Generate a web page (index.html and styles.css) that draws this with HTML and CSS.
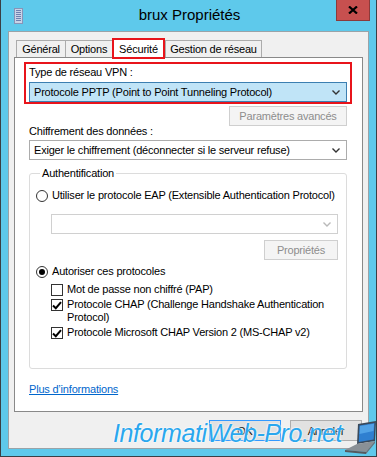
FILE: index.html
```html
<!DOCTYPE html>
<html lang="fr">
<head>
    <meta charset="UTF-8">
    <title>brux Propriétés</title>
    <link rel="stylesheet" href="styles.css">
</head>
<body>
    <div class="window">
        <div class="titlebar">
            <svg class="app-icon" width="9" height="16" viewBox="0 0 9 16">
                <rect x="0.5" y="0.5" width="8" height="15" fill="#c9d3e6" stroke="#8794b8"/>
                <rect x="2" y="2" width="5" height="1" fill="#6f80b0"/>
                <rect x="2" y="4" width="5" height="1" fill="#6f80b0"/>
                <rect x="2" y="6" width="5" height="1" fill="#6f80b0"/>
                <rect x="2" y="8" width="5" height="1" fill="#6f80b0"/>
                <rect x="2" y="10" width="5" height="1" fill="#6f80b0"/>
                <rect x="2" y="12" width="5" height="1" fill="#6f80b0"/>
            </svg>
            <div class="title">brux Propriétés</div>
            <div class="close-btn">
                <svg width="10" height="8" viewBox="0 0 10 8">
                    <path d="M1 0.5 L9 7.5 M9 0.5 L1 7.5" stroke="#000" stroke-width="2.2"/>
                </svg>
            </div>
        </div>

        <div class="client">
            <div class="tabs">
                <div class="tab tab-general">Général</div>
                <div class="tab tab-options">Options</div>
                <div class="tab tab-active">Sécurité</div>
                <div class="tab tab-gestion">Gestion de réseau</div>
            </div>

            <div class="panel">
                <div class="highlight">
                    <div class="label">Type de réseau VPN :</div>
                    <div class="combo combo-focus">
                        <span>Protocole PPTP (Point to Point Tunneling Protocol)</span>
                        <svg class="chevron" width="8" height="5" viewBox="0 0 8 5"><path d="M0.5 0.5 L4 4 L7.5 0.5" fill="none" stroke="#333" stroke-width="1.4"/></svg>
                    </div>
                </div>

                <div class="right-row">
                    <button class="btn btn-advanced" disabled>Paramètres avancés</button>
                </div>

                <div class="label label-chiffrement">Chiffrement des données :</div>
                <div class="combo">
                    <span>Exiger le chiffrement (déconnecter si le serveur refuse)</span>
                    <svg class="chevron" width="8" height="5" viewBox="0 0 8 5"><path d="M0.5 0.5 L4 4 L7.5 0.5" fill="none" stroke="#333" stroke-width="1.4"/></svg>
                </div>

                <fieldset class="group">
                    <legend>Authentification</legend>

                    <div class="option">
                        <span class="radio"></span>
                        <span>Utiliser le protocole EAP (Extensible Authentication Protocol)</span>
                    </div>

                    <div class="sub">
                        <div class="combo combo-disabled">
                            <span></span>
                            <svg class="chevron" width="8" height="5" viewBox="0 0 8 5"><path d="M0.5 0.5 L4 4 L7.5 0.5" fill="none" stroke="#b9b9b9" stroke-width="1.4"/></svg>
                        </div>
                        <div class="right-row">
                            <button class="btn btn-props" disabled>Propriétés</button>
                        </div>
                    </div>

                    <div class="option option-second">
                        <span class="radio checked"></span>
                        <span>Autoriser ces protocoles</span>
                    </div>

                    <div class="checks">
                        <div class="check-row">
                            <span class="checkbox"></span>
                            <span>Mot de passe non chiffré (PAP)</span>
                        </div>
                        <div class="check-row">
                            <span class="checkbox"><svg width="10" height="9" viewBox="0 0 10 9"><path d="M1 4.5 L3.8 7.2 L9 1.2" fill="none" stroke="#000" stroke-width="2"/></svg></span>
                            <span>Protocole CHAP (Challenge Handshake Authentication<br>Protocol)</span>
                        </div>
                        <div class="check-row">
                            <span class="checkbox"><svg width="10" height="9" viewBox="0 0 10 9"><path d="M1 4.5 L3.8 7.2 L9 1.2" fill="none" stroke="#000" stroke-width="2"/></svg></span>
                            <span>Protocole Microsoft CHAP Version 2 (MS-CHAP v2)</span>
                        </div>
                    </div>
                </fieldset>

                <a class="more-link" href="#">Plus d’informations</a>
            </div>

            <div class="dialog-buttons">
                <button class="btn btn-dialog btn-default">OK</button>
                <button class="btn btn-dialog">Annuler</button>
            </div>
        </div>

        <div class="watermark">
            <span class="watermark-text">InformatiWeb-Pro.net</span>
            <svg class="laptop" width="34" height="34" viewBox="0 0 34 34">
                <path d="M14 4 L32 1 L31 21 L13 24 Z" fill="#3a4a5c"/>
                <path d="M15.5 5.5 L30.5 3 L29.7 19.5 L14.8 22 Z" fill="#2f7fd0"/>
                <path d="M16 6 L30 3.8 L29.5 11 L15.5 14 Z" fill="#5fb0f0" opacity="0.7"/>
                <path d="M13 24 L31 21 L22 32 L1 30 Z" fill="#8a9096"/>
                <path d="M1 30 L22 32 L22 34 L1 32 Z" fill="#55595e"/>
                <path d="M22 32 L31 21 L31 23 L22 34 Z" fill="#6c7075"/>
            </svg>
        </div>
    </div>
</body>
</html>
```

FILE: styles.css
```css
* {
    box-sizing: border-box;
}

body {
    margin: 0;
    font-family: "Liberation Sans", Arial, sans-serif;
    font-size: 11px;
    letter-spacing: -0.2px;
    color: #000;
}

.window {
    position: relative;
    width: 377px;
    height: 457px;
    display: flex;
    flex-direction: column;
    background-color: #5ec9eb;
    border: 1px solid #3a3f44;
    border-top: none;
    padding: 0 7px 7px;
    overflow: hidden;
}

.titlebar {
    height: 31px;
    display: flex;
    align-items: flex-start;
    margin: 0 -7px;
    padding-left: 13px;
}

.app-icon {
    margin-top: 8px;
}

.title {
    flex: 1;
    text-align: center;
    font-size: 15px;
    letter-spacing: 0;
    line-height: 30px;
    color: #000;
    padding-left: 20px;
}

.close-btn {
    width: 34px;
    height: 21px;
    margin-right: 6px;
    background-color: #c7504f;
    border: 1px solid #8b3a3a;
    border-top: none;
    display: flex;
    align-items: center;
    justify-content: center;
}

.client {
    flex: 1;
    display: flex;
    flex-direction: column;
    background-color: #f0f0f0;
    border: 1px solid #9aa3a8;
    padding: 0 5px 7px;
}

/* tabs */
.tabs {
    display: flex;
    margin-top: 8px;
    padding-left: 2px;
    height: 17px;
    position: relative;
    z-index: 1;
}

.tab {
    height: 17px;
    line-height: 16px;
    border: 1px solid #acacac;
    border-bottom: none;
    border-right: none;
    background-color: #f0f0f0;
    text-align: center;
}

.tab-general { width: 49px; }
.tab-options { width: 47px; }
.tab-gestion { width: 97px; border-right: 1px solid #acacac; }

.tab-active {
    width: 53px;
    height: 21px;
    margin-top: -2px;
    border: 2px solid #e8141b;
    background-color: #fff;
    line-height: 18px;
}

.panel {
    flex: 1;
    background-color: #fff;
    border: 1px solid #898989;
    padding: 4px 15px 0 14px;
    display: flex;
    flex-direction: column;
    align-items: stretch;
}

.label {
    line-height: 15px;
    height: 15px;
}

.highlight {
    border: 2px solid #e8141b;
    margin: 0 -5px;
    padding: 1px 3px 0;
}

.highlight .label {
    margin-bottom: 2px;
}

.combo {
    height: 20px;
    border: 1px solid #acacac;
    background-color: #fff;
    display: flex;
    align-items: center;
    justify-content: space-between;
    padding: 0 6px 0 4px;
    white-space: nowrap;
}

.combo-focus {
    background-color: #c0e4f7;
    border-color: #3c7fb1;
}

.combo-disabled {
    border-color: #d0d0d0;
}

.chevron {
    flex-shrink: 0;
}

.right-row {
    display: flex;
    justify-content: flex-end;
}

.btn {
    font-family: "Liberation Sans", Arial, sans-serif;
    font-size: 11px;
    letter-spacing: -0.2px;
    height: 20px;
    padding: 0;
    background-color: #e1e1e1;
    border: 1px solid #adadad;
    color: #000;
}

.btn:disabled {
    background-color: #f4f4f4;
    border-color: #cfcfcf;
    color: #8d8d8d;
}

.btn-advanced {
    width: 118px;
    margin-top: 2px;
}

.label-chiffrement {
    margin-top: -2px;
    margin-bottom: 1px;
}

/* authentification group */
.group {
    margin: 6px 0 0;
    padding: 0 8px 29px 6px;
    border: 1px solid #dcdcdc;
    border-radius: 3px;
    min-width: 0;
}

.group legend {
    padding: 0 2px;
    margin-left: 4px;
    line-height: 15px;
}

.option {
    display: flex;
    align-items: center;
    gap: 4px;
    line-height: 15px;
    margin-top: 7px;
    white-space: nowrap;
}

.option-second {
    margin-top: 4px;
}

.radio {
    flex-shrink: 0;
    width: 12px;
    height: 12px;
    border: 1px solid #333;
    border-radius: 50%;
    background-color: #fff;
    display: flex;
    align-items: center;
    justify-content: center;
}

.radio.checked::after {
    content: "";
    width: 6px;
    height: 6px;
    border-radius: 50%;
    background-color: #000;
}

.sub {
    padding-left: 15px;
}

.sub .combo {
    margin-top: 11px;
}

.btn-props {
    width: 74px;
    margin-top: 6px;
}

.checks {
    padding-left: 15px;
    margin-top: 4px;
    display: flex;
    flex-direction: column;
    gap: 2px;
}

.check-row {
    display: flex;
    align-items: flex-start;
    gap: 4px;
    line-height: 13px;
}

.checkbox {
    flex-shrink: 0;
    width: 12px;
    height: 12px;
    margin-top: 1px;
    border: 1px solid #333;
    background-color: #fff;
    display: flex;
    align-items: center;
    justify-content: center;
}

.more-link {
    margin-top: 13px;
    align-self: flex-start;
    color: #0066cc;
    line-height: 15px;
}

.dialog-buttons {
    display: flex;
    justify-content: flex-end;
    gap: 9px;
    margin-top: 8px;
    padding-right: 1px;
}

.btn-dialog {
    width: 72px;
    height: 21px;
}

.btn-default {
    border-color: #3399ff;
}

/* watermark over the bottom of the dialog */
.watermark {
    position: absolute;
    left: 112px;
    top: 418px;
    display: flex;
    align-items: flex-end;
    white-space: nowrap;
    pointer-events: none;
}

.watermark-text {
    font-family: "Liberation Sans", Arial, sans-serif;
    font-style: italic;
    font-size: 25px;
    color: #2aa7ee;
    letter-spacing: -0.4px;
    text-shadow: 0 0 2px #fff, 0 0 2px #fff;
    line-height: 30px;
}

.laptop {
    margin-left: 2px;
    margin-bottom: -6px;
}
```
